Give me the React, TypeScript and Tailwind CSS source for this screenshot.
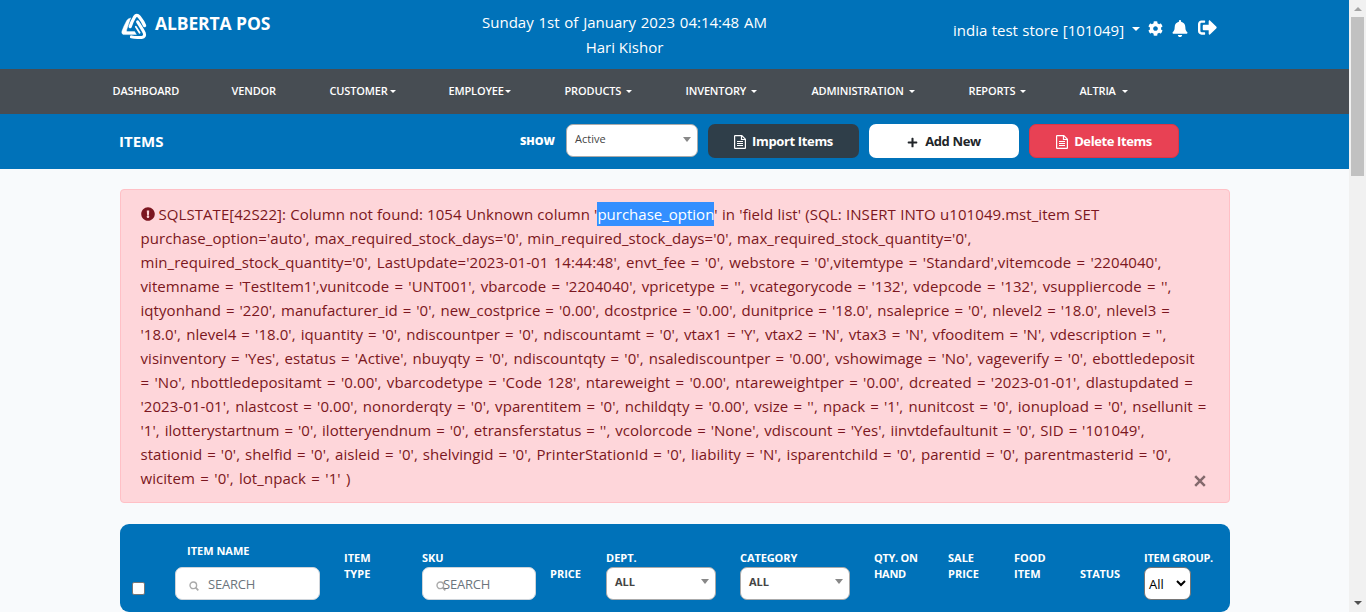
import type { ReactNode } from "react";
import { FaBell, FaCog, FaExclamationCircle, FaPlus, FaSignOutAlt } from "react-icons/fa";

function Caret({ className = "" }: { className?: string }) {
  return (
    <span
      className={`inline-block h-0 w-0 border-x-transparent border-t-white ${className}`}
    />
  );
}

function SelectArrow() {
  return <span className="h-0 w-0 border-x-4 border-t-[5px] border-x-transparent border-t-[#888]" />;
}

function SearchIcon() {
  return (
    <svg width="10" height="10" viewBox="0 0 10 10" fill="none" stroke="#aaa" className="mt-[4px] shrink-0">
      <circle cx="4.3" cy="4.3" r="3.3" strokeWidth="1.4" />
      <path d="M6.7 6.7L9.3 9.3" strokeWidth="1.7" />
    </svg>
  );
}

function FileIcon() {
  return (
    <svg width="12" height="14" viewBox="0 0 12 14" fill="none" stroke="currentColor">
      <path d="M.6 1.1Q.6.6 1.1.6H7.8L11.4 4.2V12.9Q11.4 13.4 10.9 13.4H1.1Q.6 13.4.6 12.9Z" strokeWidth="1.2" />
      <path d="M7.5.8V4.5H11.2" strokeWidth="1.2" />
      <path d="M3 6.5H9M3 8.5H9M3 10.5H9" />
    </svg>
  );
}

function Logo() {
  return (
    <svg width="26" height="27" viewBox="0 0 26 27" fill="none" stroke="white" strokeLinecap="round" strokeLinejoin="round">
      <path d="M9.6 5.2C7 5.2 6 7 5 9C3.4 12 2 15 .9 18.2Q.2 21.6 3.6 21.6H15.4L13.6 18.6H6.6Q5 18.6 5.6 17C6.8 13 8.4 9 9.6 5.2Z" fill="white" strokeWidth=".4" />
      <path d="M9.2 13.6C10.4 10 11.6 7.2 13.6 4Q15.8 1 18.2 3.8C20.6 6.8 22.4 9.6 23.6 12.6" strokeWidth="3.3" />
      <path d="M16.6 8.8C19 12.4 21.4 16 23.2 19.8Q24.6 24 20.8 24.4C16.8 24.8 13 24.6 10.4 23.9" strokeWidth="3" />
      <path d="M14.8 13.8L18.6 19.8" strokeWidth="1.8" />
    </svg>
  );
}

const navItems = [
  { label: "DASHBOARD", cell: "w-[119px]", caret: "" },
  { label: "VENDOR", cell: "w-[98px]", caret: "" },
  { label: "CUSTOMER", cell: "w-[119px]", caret: "ml-[2px]" },
  { label: "EMPLOYEE", cell: "w-[116px]", caret: "ml-[1px]" },
  { label: "PRODUCTS", cell: "w-[121px]", caret: "ml-[5px]" },
  { label: "INVENTORY", cell: "w-[126px]", caret: "ml-[5px]" },
  { label: "ADMINISTRATION", cell: "w-[157px]", caret: "ml-[5px]" },
  { label: "REPORTS", cell: "w-[111px]", caret: "ml-[5px]" },
  { label: "ALTRIA", cell: "w-[80px]", caret: "ml-[6px]" },
];

const errorLines = [
  { spacing: "[word-spacing:0.7px]", text: "purchase_option='auto', max_required_stock_days='0', min_required_stock_days='0', max_required_stock_quantity='0'," },
  { spacing: "[word-spacing:1.35px]", text: "min_required_stock_quantity='0', LastUpdate='2023-01-01 14:44:48', envt_fee = '0', webstore = '0',vitemtype = 'Standard',vitemcode = '2204040'," },
  { spacing: "[word-spacing:1.31px]", text: "vitemname = 'TestItem1',vunitcode = 'UNT001', vbarcode = '2204040', vpricetype = '', vcategorycode = '132', vdepcode = '132', vsuppliercode = ''," },
  { spacing: "[word-spacing:0.95px]", text: "iqtyonhand = '220', manufacturer_id = '0', new_costprice = '0.00', dcostprice = '0.00', dunitprice = '18.0', nsaleprice = '0', nlevel2 = '18.0', nlevel3 =" },
  { spacing: "[word-spacing:1.15px]", text: "'18.0', nlevel4 = '18.0', iquantity = '0', ndiscountper = '0', ndiscountamt = '0', vtax1 = 'Y', vtax2 = 'N', vtax3 = 'N', vfooditem = 'N', vdescription = ''," },
  { spacing: "[word-spacing:1.16px]", text: "visinventory = 'Yes', estatus = 'Active', nbuyqty = '0', ndiscountqty = '0', nsalediscountper = '0.00', vshowimage = 'No', vageverify = '0', ebottledeposit" },
  { spacing: "[word-spacing:1.34px]", text: "= 'No', nbottledepositamt = '0.00', vbarcodetype = 'Code 128', ntareweight = '0.00', ntareweightper = '0.00', dcreated = '2023-01-01', dlastupdated =" },
  { spacing: "[word-spacing:1.18px]", text: "'2023-01-01', nlastcost = '0.00', nonorderqty = '0', vparentitem = '0', nchildqty = '0.00', vsize = '', npack = '1', nunitcost = '0', ionupload = '0', nsellunit =" },
  { spacing: "[word-spacing:0.9px]", text: "'1', ilotterystartnum = '0', ilotteryendnum = '0', etransferstatus = '', vcolorcode = 'None', vdiscount = 'Yes', iinvtdefaultunit = '0', SID = '101049'," },
  { spacing: "[word-spacing:1.05px]", text: "stationid = '0', shelfid = '0', aisleid = '0', shelvingid = '0', PrinterStationId = '0', liability = 'N', isparentchild = '0', parentid = '0', parentmasterid = '0'," },
  { spacing: "[word-spacing:1.4px]", text: "wicitem = '0', lot_npack = '1' )" },
];

function Column({ className, children }: { className: string; children: ReactNode }) {
  return <div className={`flex shrink-0 flex-col items-start ${className}`}>{children}</div>;
}

function AllSelect() {
  return (
    <button className="mt-px flex h-[33px] w-[110px] items-center justify-between rounded-[7px] border border-[#aaa] bg-white pr-[6px] pb-[4px] pl-2 text-[11px] font-bold text-[#444]">
      ALL
      <SelectArrow />
    </button>
  );
}

export default function App() {
  return (
    <div className="flex h-[612px] w-full overflow-hidden bg-[#f8fafc] font-['Open_Sans','Noto_Sans',sans-serif]">
      <div className="flex min-w-0 flex-1 flex-col">
        <header className="flex h-[69px] shrink-0 bg-[#0072b9] text-white">
          <div className="flex w-[350px] items-start pt-[13px] pl-[121px]">
            <Logo />
            <span className="-mt-px ml-[8px] text-[17.5px] leading-[22px] font-bold tracking-[-0.1px] whitespace-nowrap">ALBERTA POS</span>
          </div>
          <div className="w-[549px] pt-[10px] text-center text-[15px] leading-[25px]">
            <div className="[word-spacing:0.9px]">Sunday 1st of January 2023 04:14:48 AM</div>
            <div>Hari Kishor</div>
          </div>
          <div className="flex items-start pt-[18px] pl-[54px]">
            <span className="text-[15px] leading-6 whitespace-nowrap [word-spacing:0.5px]">india test store [101049]</span>
            <Caret className="mt-[9px] ml-[8px] border-x-[4.5px] border-t-[4.5px]" />
            <FaCog className="mt-[3px] ml-[8px] size-[15px]" />
            <FaBell className="mt-[2px] ml-[9px] h-[17px] w-4" />
            <FaSignOutAlt className="ml-[10px] size-[19px]" />
          </div>
        </header>

        <nav className="flex h-[45px] shrink-0 items-center bg-[#474d53] pl-[112.5px] text-[11px] font-semibold tracking-[-0.15px] text-white">
          {navItems.map((item) => (
            <a key={item.label} className={`flex items-center whitespace-nowrap ${item.cell}`}>
              {item.label}
              {item.caret && <Caret className={`border-x-[3px] border-t-[3px] ${item.caret}`} />}
            </a>
          ))}
        </nav>

        <div className="flex h-[55px] shrink-0 items-start bg-[#0072b9] pt-[10px] pl-[119px] text-white">
          <h1 className="w-[401px] text-[15px] leading-[34px] font-bold">ITEMS</h1>
          <span className="w-[46px] text-[11px] leading-[34px] font-extrabold">SHOW</span>
          <button className="flex h-[33px] w-[132px] items-center justify-between rounded-[7px] border border-[#aaa] bg-white pr-[6px] pb-[3px] pl-2 text-[11px] text-[#444]">
            Active
            <SelectArrow />
          </button>
          <button className="ml-[10px] flex h-[34px] w-[151px] items-center justify-center gap-[6px] rounded-[7px] bg-[#2f3e49] pt-[2px] text-[13px] font-bold tracking-[-0.35px]">
            <FileIcon />
            Import Items
          </button>
          <button className="ml-[10px] flex h-[34px] w-[150px] items-center justify-center gap-[7px] rounded-[7px] bg-white pt-[2px] text-[13px] font-bold tracking-[-0.35px] text-[#212529]">
            <FaPlus className="size-[11px]" />
            Add New
          </button>
          <button className="ml-[10px] flex h-[34px] w-[150px] items-center justify-center gap-[6px] rounded-[7px] border border-[#dc3545] bg-[#e84154] pt-[2px] text-[13px] font-bold tracking-[-0.4px]">
            <FileIcon />
            Delete Items
          </button>
        </div>

        <main className="flex flex-col pt-5 pl-[120px]">
          <section className="flex h-[314px] w-[1110px] rounded-[4px] border border-[#ffc0c6] bg-[#fed6da] py-3 pl-[19.5px] text-[15px] leading-6 tracking-[0.06px] whitespace-nowrap text-[#7b1620]">
            <div className="w-[1053px]">
              <div className="flex items-center">
                <FaExclamationCircle className="mr-[4px] size-[14px]" />
                <span className="whitespace-pre [word-spacing:0.15px]">SQLSTATE[42S22]: Column not found: 1054 Unknown column '</span>
                <span className="bg-[#338fff] tracking-normal text-white">purchase_option</span>
                <span className="whitespace-pre [word-spacing:0.3px]">' in 'field list' (SQL: INSERT INTO u101049.mst_item SET</span>
              </div>
              {errorLines.map((line) => (
                <div key={line.text} className={line.spacing}>
                  {line.text}
                </div>
              ))}
            </div>
            <button className="flex h-6 items-center self-end text-[#83696c]" aria-label="Close">
              <svg width="12" height="12" viewBox="0 0 12 12" stroke="currentColor" strokeWidth="2.5" className="mt-[5px]">
                <path d="M1.2 1.2L10.8 10.8M10.8 1.2L1.2 10.8" />
              </svg>
            </button>
          </section>

          <section className="mt-[21px] flex h-[88px] w-[1110px] rounded-[9px] bg-[#0072b9] text-[11px] leading-4 font-bold whitespace-nowrap text-white">
            <Column className="w-[55px] pt-[58px] pl-[12px]">
              <span className="size-[13px] rounded-[2px] border border-[#767676] bg-white" />
            </Column>
            <Column className="w-[169px] pt-[19px]">
              <span className="ml-[12px]">ITEM NAME</span>
              <div className="mt-2 flex h-[33px] w-[145px] items-center rounded-[7px] border border-[#ced4da] bg-white pl-[13px] text-[13px] font-normal tracking-[-0.2px] text-[#6c757d]">
                <SearchIcon />
                <span className="ml-[9px]">SEARCH</span>
              </div>
            </Column>
            <Column className="w-[78px] pt-[26px]">
              <span>ITEM</span>
              <span>TYPE</span>
            </Column>
            <Column className="w-[128px] pt-[26px]">
              <span>SKU</span>
              <div className="mt-px flex h-[33px] w-[114px] items-center rounded-[7px] border border-[#ced4da] bg-white pl-[13px] text-[13px] font-normal tracking-[-0.2px] text-[#6c757d]">
                <SearchIcon />
                <span className="-ml-[3px]">SEARCH</span>
              </div>
            </Column>
            <Column className="w-[56px] pt-[42px]">PRICE</Column>
            <Column className="w-[134px] pt-[26px]">
              <span>DEPT.</span>
              <AllSelect />
            </Column>
            <Column className="w-[134px] pt-[26px]">
              <span className="tracking-[-0.1px]">CATEGORY</span>
              <AllSelect />
            </Column>
            <Column className="w-[74px] pt-[26px] tracking-[-0.3px]">
              <span>QTY. ON</span>
              <span>HAND</span>
            </Column>
            <Column className="w-[66px] pt-[26px]">
              <span>SALE</span>
              <span>PRICE</span>
            </Column>
            <Column className="w-[66px] pt-[26px]">
              <span>FOOD</span>
              <span>ITEM</span>
            </Column>
            <Column className="w-[64px] pt-[42px] tracking-[-0.15px]">STATUS</Column>
            <Column className="w-[80px] pt-[26px]">
              <span className="tracking-[-0.25px]">ITEM GROUP.</span>
              <button className="mt-px flex h-[33px] w-[47px] items-center justify-between rounded-[7px] border border-[#767676] bg-white pr-[4px] pl-[4px] text-[13px] font-normal text-black">
                All
                <svg width="10" height="7" viewBox="0 0 10 7" fill="none" stroke="black" strokeWidth="2">
                  <path d="M1 1L5 5L9 1" />
                </svg>
              </button>
            </Column>
          </section>
        </main>
      </div>

      <div className="flex w-[17px] shrink-0 flex-col items-center justify-between bg-[#f1f1f1]">
        <div className="flex flex-col items-center">
          <span className="mt-[7px] h-0 w-0 border-x-4 border-b-4 border-x-transparent border-b-[#a3a3a3]" />
          <span className="mt-[6px] h-[159px] w-[13px] bg-[#c1c1c1]" />
        </div>
        <span className="mb-[7px] h-0 w-0 border-x-4 border-t-4 border-x-transparent border-t-[#505050]" />
      </div>
    </div>
  );
}
